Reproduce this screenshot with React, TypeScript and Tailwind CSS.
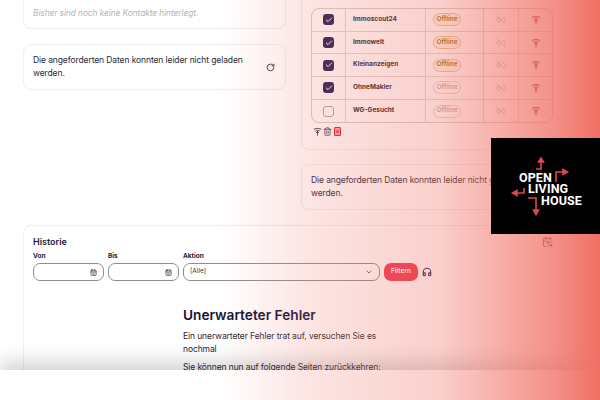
import { CalendarDays, Check, ChevronDown, Headphones, Link2Off, RotateCw, CalendarSync, Trash2 } from "lucide-react"

const font = "font-['Inter','Liberation_Sans',sans-serif]"

const portals = [
  { name: "Immoscout24", checked: true, active: true },
  { name: "Immowelt", checked: true, active: true },
  { name: "Kleinanzeigen", checked: true, active: true },
  { name: "OhneMakler", checked: true, active: false },
  { name: "WG-Gesucht", checked: false, active: false },
]

function PublishIcon({ className }: { className: string }) {
  return (
    <svg viewBox="0 0 12 12" fill="none" stroke="currentColor" strokeWidth="1.2" strokeLinecap="round" className={className}>
      <path d="M1.500 2.800C4 1.500 8 1.500 10.500 2.800" />
      <path d="M3.500 5C5 4.300 7 4.300 8.500 5" />
      <path d="M6 11V5.800" />
      <path d="M4.600 7.400 6 5.800l1.400 1.600" />
    </svg>
  )
}

function PortalRow({ name, checked, active, last }: { name: string; checked: boolean; active: boolean; last: boolean }) {
  return (
    <div className={`grid h-[22.7px] grid-cols-[34px_80px_58px_35px_33px] items-center ${last ? "" : "border-b border-[#e3d5d5]"}`}>
      <div className="flex h-full items-center justify-center border-r border-[#e3d5d5]">
        {checked ? (
          <span className="flex h-[11px] w-[11px] items-center justify-center rounded-[3px] bg-[#2b1a55]">
            <Check className="h-[8px] w-[8px] text-white" strokeWidth={3} />
          </span>
        ) : (
          <span className="h-[11px] w-[11px] rounded-[3px] border border-[#a9a3a8] bg-white/40" />
        )}
      </div>
      <div className="flex h-full items-center border-r border-[#e3d5d5] pl-[7px] text-[6.500px] font-bold text-[#26222f]">{name}</div>
      <div className="flex h-full items-center border-r border-[#e3d5d5] pl-[7px]">
        <span
          className={`flex h-[13px] w-[28px] items-center justify-center rounded-full border text-[6.500px] font-semibold ${
            active ? "border-[#d9c9a2] bg-[#fdf8e4] text-[#7d6f2e]" : "border-[#ddd5d5] text-[#b9b2b2]"
          }`}
        >
          Offline
        </span>
      </div>
      <div className="flex h-full items-center justify-center border-r border-[#e3d5d5]">
        <Link2Off className="h-[10px] w-[10px] text-[#b5aeb0]" strokeWidth={1.6} />
      </div>
      <div className="flex h-full items-center justify-center">
        <PublishIcon className="h-[10px] w-[10px] text-[#9b1028]" />
      </div>
    </div>
  )
}

function ErrorText() {
  return <p className="text-[8.500px] leading-[13px] tracking-[-0.1px] text-[#2a2735]">Die angeforderten Daten konnten leider nicht geladen werden.</p>
}

function Logo() {
  return (
    <div className="absolute right-0 top-[138px] h-[96px] w-[109px] bg-black">
      <svg viewBox="0 0 109 96" fill="none" stroke="#e0464f" strokeWidth="1.6" className="absolute inset-0 h-full w-full">
        <path d="M45 31h5V22" />
        <path d="m47.500 24 2.500-4 2.500 4z" fill="#e0464f" />
        <path d="M65 44V34h9" />
        <path d="m72 31.500 4.500 2.500-4.500 2.500z" fill="#e0464f" />
        <path d="M33 50v5H25" />
        <path d="m26 52.500-4.500 2.500 4.500 2.500z" fill="#e0464f" />
        <path d="M37 60h8v13" />
        <path d="m42.500 72 2.500 4.500 2.500-4.500z" fill="#e0464f" />
      </svg>
      <div className="absolute left-[28px] top-[33.500px] font-['Roboto',sans-serif] text-[12.500px] font-bold leading-[11.500px] tracking-[0.1px] text-white">
        <div>OPEN</div>
        <div className="ml-[9px]">LIVING</div>
        <div className="ml-[22px]">HOUSE</div>
      </div>
    </div>
  )
}

export default function App() {
  return (
    <div className={`relative h-[400px] w-[600px] overflow-hidden bg-white ${font}`}>
      <div className="-mt-[20px] pl-[23px] pr-[37px]">
        <div className="grid grid-cols-[263px_262px] gap-x-[15px]">
          <div className="flex flex-col gap-[15px]">
            <div className="flex h-[49px] items-end rounded-b-lg border border-[#eeeeee] px-[9px] pb-[8px]">
              <p className="text-[8.300px] italic leading-[13px] tracking-[-0.05px] text-[#b4b4b8]">Bisher sind noch keine Kontakte hinterlegt.</p>
            </div>
            <div className="flex h-[46px] items-center justify-between rounded-lg border border-[#eeeeee] pl-[9px] pr-[10px]">
              <div className="w-[220px]">
                <ErrorText />
              </div>
              <RotateCw className="h-[9px] w-[9px] text-[#33303f]" strokeWidth={2.4} />
            </div>
          </div>

          <div className="flex flex-col gap-[14px]">
            <div className="h-[170px] rounded-b-lg border border-[#eeeeee] px-[9px] pt-[12px]">
              <p className="mb-[5px] text-[7.500px] font-semibold leading-[10px] text-[#8b8690]">Portale</p>
              <div className="w-[242px] overflow-hidden rounded-lg border border-[#d9cccc]">
                {portals.map((p, i) => (
                  <PortalRow key={p.name} {...p} last={i === portals.length - 1} />
                ))}
              </div>
              <div className="ml-[2px] mt-[4px] flex items-center gap-[1px]">
                <PublishIcon className="h-[9px] w-[9px] text-[#2f2a3d]" />
                <Trash2 className="h-[9px] w-[9px] text-[#2f2a3d]" strokeWidth={2} />
                <span className="ml-[1px] flex h-[9px] w-[7px] items-center justify-center rounded-[1px] border border-[#d21f2e] bg-[#f3a0a0] text-[6px] font-bold leading-none text-[#d21f2e]">×</span>
              </div>
            </div>
            <div className="flex h-[46px] items-center rounded-lg border border-[#eeeeee] px-[9px]">
              <div className="w-[220px]">
                <ErrorText />
              </div>
            </div>
          </div>
        </div>

        <div className="mt-[15px] h-[220px] rounded-lg border border-[#eeeeee] px-[9px] pt-[10px]">
          <div className="flex items-center justify-between">
            <h2 className="text-[9px] font-semibold leading-[12px] text-[#1b1a3a]">Historie</h2>
            <CalendarSync className="h-[12px] w-[11px] text-[#1f1a3a]" strokeWidth={1.6} />
          </div>
          <div className="mt-[3px] flex items-end gap-[4px]">
            <label className="block w-[71px]">
              <span className="mb-[2px] block text-[6.500px] font-bold leading-[10px] text-[#1b1a3a]">Von</span>
              <span className="flex h-[18px] items-center justify-end rounded-[7px] border border-[#8e8e8e] pr-[6px]">
                <CalendarDays className="h-[7px] w-[7px] text-[#333]" strokeWidth={2.2} />
              </span>
            </label>
            <label className="block w-[71px]">
              <span className="mb-[2px] block text-[6.500px] font-bold leading-[10px] text-[#1b1a3a]">Bis</span>
              <span className="flex h-[18px] items-center justify-end rounded-[7px] border border-[#8e8e8e] pr-[6px]">
                <CalendarDays className="h-[7px] w-[7px] text-[#333]" strokeWidth={2.2} />
              </span>
            </label>
            <label className="block w-[197px]">
              <span className="mb-[2px] block text-[6.500px] font-bold leading-[10px] text-[#1b1a3a]">Aktion</span>
              <span className="flex h-[18px] items-center justify-between rounded-[7px] border border-[#8e8e8e] pl-[6px] pr-[6px] text-[6.500px] text-[#333]">
                [Alle]
                <ChevronDown className="h-[8px] w-[8px] text-[#333]" strokeWidth={2.2} />
              </span>
            </label>
            <button className="h-[18px] w-[34px] rounded-[7px] bg-[#ee3850] text-[6.500px] font-semibold text-white">Filtern</button>
            <Headphones className="mb-[4px] h-[10px] w-[10px] text-[#1f1a3a]" strokeWidth={2.6} />
          </div>
          <div className="ml-[150px] mt-[24px] w-[220px]">
            <h1 className="text-[13.700px] font-semibold leading-[20px] text-[#14133a]">Unerwarteter Fehler</h1>
            <p className="mt-[5px] text-[8.500px] leading-[13px] tracking-[-0.1px] text-[#2a2735]">Ein unerwarteter Fehler trat auf, versuchen Sie es nochmal</p>
            <p className="mt-[5px] text-[8.500px] leading-[13px] tracking-[-0.1px] text-[#2a2735]">Sie können nun auf folgende Seiten zurückkehren:</p>
          </div>
        </div>
      </div>

      <div className="absolute inset-x-0 bottom-0 h-[30px] bg-white shadow-[0_-8px_20px_rgba(0,0,0,0.18)]" />
      <div className="pointer-events-none absolute inset-0 bg-[linear-gradient(90deg,rgba(239,111,99,0)_36.700%,rgba(239,111,99,0.17)_50%,rgba(239,111,99,0.33)_73%,rgba(239,111,99,0.55)_83%,rgba(239,111,99,0.78)_93%,rgba(239,111,99,1)_100%)]" />
      <Logo />
    </div>
  )
}
